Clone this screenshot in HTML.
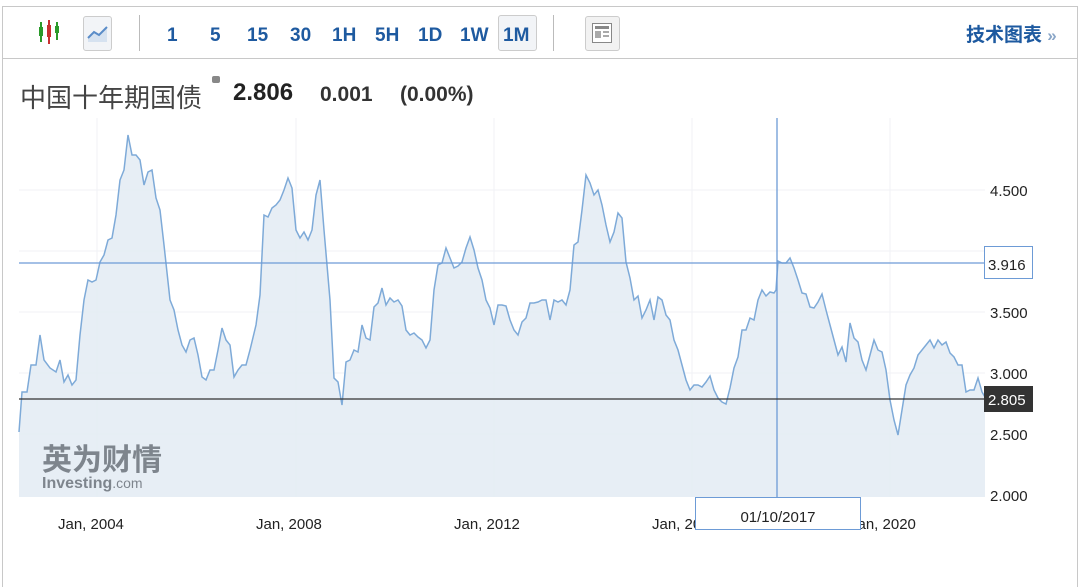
<!DOCTYPE html>
<html><head><meta charset="utf-8"><style>
body{margin:0;width:1080px;height:578px;background:#fff;overflow:hidden;font-family:"Liberation Sans","Noto Sans CJK SC",sans-serif;position:relative}
.a{position:absolute}
.tb{color:#1e5aa0;font-weight:bold;font-size:19px;top:25px}
</style></head><body>
<div class="a" style="left:2px;top:6px;width:1074px;height:580px;border:1px solid #c8c8c8;border-bottom:none"></div>
<div class="a" style="left:2px;top:58px;width:1075px;height:1px;background:#c8c8c8"></div>
<svg class="a" style="left:36px;top:20px" width="28" height="26"><g stroke-width="2"><line x1="5" y1="2" x2="5" y2="22" stroke="#2a9a2a"/><line x1="13" y1="0" x2="13" y2="24" stroke="#c83030"/><line x1="21" y1="2" x2="21" y2="20" stroke="#2a9a2a"/></g><rect x="3" y="7" width="4" height="9" fill="#2a9a2a"/><rect x="11" y="5" width="4" height="12" fill="#c83030"/><rect x="19" y="6" width="4" height="7" fill="#2a9a2a"/></svg>
<div class="a" style="left:83px;top:16px;width:27px;height:33px;border:1px solid #ccc;border-radius:3px;background:#f2f4f7"></div>
<svg class="a" style="left:87px;top:24px" width="22" height="20"><path d="M1 14 L7 8 L12 11 L20 3 L20 18 L1 18Z" fill="#d6e2f0"/><path d="M1 14 L7 8 L12 11 L20 3" stroke="#5a8cc8" stroke-width="2" fill="none"/></svg>
<div class="a" style="left:139px;top:15px;width:1px;height:36px;background:#bbb"></div>
<div class="a tb" style="left:167px">1</div>
<div class="a tb" style="left:210px">5</div>
<div class="a tb" style="left:247px">15</div>
<div class="a tb" style="left:290px">30</div>
<div class="a tb" style="left:332px">1H</div>
<div class="a tb" style="left:375px">5H</div>
<div class="a tb" style="left:418px">1D</div>
<div class="a tb" style="left:460px">1W</div>
<div class="a" style="left:498px;top:15px;width:37px;height:34px;border:1px solid #ccc;border-radius:3px;background:#f2f4f7"></div>
<div class="a tb" style="left:503px">1M</div>
<div class="a" style="left:553px;top:15px;width:1px;height:36px;background:#bbb"></div>
<div class="a" style="left:585px;top:16px;width:33px;height:33px;border:1px solid #ccc;border-radius:3px;background:#f2f2f2"></div>
<svg class="a" style="left:592px;top:23px" width="20" height="20"><rect x="0.5" y="0.5" width="19" height="19" fill="#fff" stroke="#888"/><rect x="3" y="3" width="14" height="3" fill="#888"/><rect x="3" y="8" width="6" height="7" fill="#aaa"/><rect x="11" y="8" width="6" height="2" fill="#aaa"/><rect x="11" y="12" width="6" height="2" fill="#aaa"/></svg>
<div class="a" style="left:966px;top:20px;color:#1e5aa0;font-weight:bold;font-size:19px">技术图表 <span style="color:#8aa6c8;font-size:17px">»</span></div>
<div class="a" style="left:20px;top:78px;font-size:26px;color:#444">中国十年期国债</div>
<div class="a" style="left:212px;top:76px;width:8px;height:7px;background:#888;border-radius:2px"></div>
<div class="a" style="left:233px;top:79px;font-size:24px;font-weight:bold;color:#222">2.806</div>
<div class="a" style="left:320px;top:83px;font-size:21px;font-weight:bold;color:#333">0.001</div>
<div class="a" style="left:400px;top:83px;font-size:21px;font-weight:bold;color:#333">(0.00%)</div>
<svg class="a" style="left:0;top:0" width="1080" height="578">
<rect x="19" y="118" width="966" height="379" fill="#fff"/>
<g stroke="#f0f2f5" stroke-width="1"><line x1="97" y1="118" x2="97" y2="497"/><line x1="296" y1="118" x2="296" y2="497"/><line x1="494" y1="118" x2="494" y2="497"/><line x1="692" y1="118" x2="692" y2="497"/><line x1="890" y1="118" x2="890" y2="497"/><line x1="19" y1="190" x2="985" y2="190"/><line x1="19" y1="251" x2="985" y2="251"/><line x1="19" y1="312" x2="985" y2="312"/><line x1="19" y1="373" x2="985" y2="373"/><line x1="19" y1="434" x2="985" y2="434"/></g>
<polygon fill="#e4ecf4" fill-opacity="0.9" points="19,497 19,432 22,392 27,392 31,365 36,365 40,335 44,360 50,368 56,372 60,360 64,382 68,375 72,385 76,380 80,335 84,300 88,280 92,282 96,280 100,262 104,255 108,240 112,238 116,215 120,180 124,170 128,135 132,155 136,155 140,160 144,185 148,172 152,170 156,198 160,210 164,245 170,300 174,310 178,330 182,345 186,352 190,340 194,338 198,355 202,377 206,380 210,370 214,370 218,350 222,328 226,340 230,345 234,377 238,370 242,365 246,365 250,350 256,325 260,295 264,215 268,217 272,208 276,205 280,200 284,190 288,178 292,188 296,230 300,238 304,232 308,240 312,230 316,195 320,180 324,230 330,300 334,378 338,382 342,405 346,362 350,360 354,350 358,352 362,325 366,338 370,340 374,307 378,303 382,288 386,305 390,298 394,302 398,300 402,306 406,330 410,335 414,333 418,337 422,340 426,348 430,340 434,290 438,265 442,263 446,248 450,258 454,268 458,266 462,262 466,248 470,237 474,250 478,268 482,280 486,300 490,308 494,325 498,305 502,305 506,306 510,320 514,330 518,335 522,322 526,318 530,303 534,303 538,302 542,300 546,300 550,320 554,300 558,302 562,300 566,305 570,290 574,245 578,242 582,210 586,175 590,183 594,195 598,190 602,205 606,225 610,242 614,232 618,213 622,218 626,262 630,278 634,300 638,296 642,318 646,310 650,300 654,320 658,297 662,300 666,315 670,320 674,340 678,350 682,365 686,380 690,390 694,385 698,385 702,387 706,382 710,376 714,390 718,398 722,402 726,404 730,388 734,368 738,357 742,330 746,330 750,318 754,320 758,300 762,290 766,296 770,292 774,293 776,290 778,261 782,263 786,263 790,258 794,268 798,280 802,293 806,294 810,307 814,308 818,302 822,294 826,310 830,325 834,340 838,355 842,347 846,362 850,323 854,338 858,342 862,360 866,370 870,355 874,340 878,350 882,352 886,370 890,400 894,420 898,435 902,410 906,385 910,375 914,368 918,355 922,350 926,345 930,340 934,348 938,340 942,345 946,342 950,353 954,357 958,365 962,365 966,392 970,390 974,390 978,378 982,392 985,397 985,497"/>
<polyline fill="none" stroke="#7eaad8" stroke-width="1.5" points="19,432 22,392 27,392 31,365 36,365 40,335 44,360 50,368 56,372 60,360 64,382 68,375 72,385 76,380 80,335 84,300 88,280 92,282 96,280 100,262 104,255 108,240 112,238 116,215 120,180 124,170 128,135 132,155 136,155 140,160 144,185 148,172 152,170 156,198 160,210 164,245 170,300 174,310 178,330 182,345 186,352 190,340 194,338 198,355 202,377 206,380 210,370 214,370 218,350 222,328 226,340 230,345 234,377 238,370 242,365 246,365 250,350 256,325 260,295 264,215 268,217 272,208 276,205 280,200 284,190 288,178 292,188 296,230 300,238 304,232 308,240 312,230 316,195 320,180 324,230 330,300 334,378 338,382 342,405 346,362 350,360 354,350 358,352 362,325 366,338 370,340 374,307 378,303 382,288 386,305 390,298 394,302 398,300 402,306 406,330 410,335 414,333 418,337 422,340 426,348 430,340 434,290 438,265 442,263 446,248 450,258 454,268 458,266 462,262 466,248 470,237 474,250 478,268 482,280 486,300 490,308 494,325 498,305 502,305 506,306 510,320 514,330 518,335 522,322 526,318 530,303 534,303 538,302 542,300 546,300 550,320 554,300 558,302 562,300 566,305 570,290 574,245 578,242 582,210 586,175 590,183 594,195 598,190 602,205 606,225 610,242 614,232 618,213 622,218 626,262 630,278 634,300 638,296 642,318 646,310 650,300 654,320 658,297 662,300 666,315 670,320 674,340 678,350 682,365 686,380 690,390 694,385 698,385 702,387 706,382 710,376 714,390 718,398 722,402 726,404 730,388 734,368 738,357 742,330 746,330 750,318 754,320 758,300 762,290 766,296 770,292 774,293 776,290 778,261 782,263 786,263 790,258 794,268 798,280 802,293 806,294 810,307 814,308 818,302 822,294 826,310 830,325 834,340 838,355 842,347 846,362 850,323 854,338 858,342 862,360 866,370 870,355 874,340 878,350 882,352 886,370 890,400 894,420 898,435 902,410 906,385 910,375 914,368 918,355 922,350 926,345 930,340 934,348 938,340 942,345 946,342 950,353 954,357 958,365 962,365 966,392 970,390 974,390 978,378 982,392 985,397"/>
<line x1="19" y1="263" x2="985" y2="263" stroke="#6d9bd6" stroke-width="1.3"/>
<line x1="777" y1="118" x2="777" y2="497" stroke="#6d9bd6" stroke-width="1.3"/>
<line x1="19" y1="399" x2="985" y2="399" stroke="#333" stroke-width="1.2"/>
<g font-family="Liberation Sans,sans-serif" font-size="15" fill="#222">
<text x="990" y="196">4.500</text><text x="990" y="318">3.500</text><text x="990" y="379">3.000</text><text x="990" y="440">2.500</text><text x="990" y="501">2.000</text>
<text x="58" y="529">Jan, 2004</text><text x="256" y="529">Jan, 2008</text><text x="454" y="529">Jan, 2012</text><text x="652" y="529">Jan, 2016</text><text x="850" y="529">Jan, 2020</text>
</g>
<rect x="984.5" y="246.5" width="48" height="32" fill="#fff" stroke="#6d9bd6"/>
<text x="988" y="270" font-family="Liberation Sans,sans-serif" font-size="15" fill="#222">3.916</text>
<rect x="984" y="386" width="49" height="26" fill="#333"/>
<text x="988" y="405" font-family="Liberation Sans,sans-serif" font-size="15" fill="#fff">2.805</text>
<rect x="695.5" y="497.5" width="165" height="32" fill="#fff" stroke="#6d9bd6"/>
<text x="778" y="522" text-anchor="middle" font-family="Liberation Sans,sans-serif" font-size="15" fill="#222">01/10/2017</text>
<text x="42" y="470" font-family="Noto Sans CJK SC,sans-serif" font-weight="bold" font-size="30" fill="#6c737c" opacity="0.85">英为财情</text>
<text x="42" y="488" font-family="Liberation Sans,sans-serif" font-weight="bold" font-size="16" fill="#6c737c" opacity="0.85">Investing<tspan font-weight="normal" font-size="14">.com</tspan></text>
</svg>
</body></html>
